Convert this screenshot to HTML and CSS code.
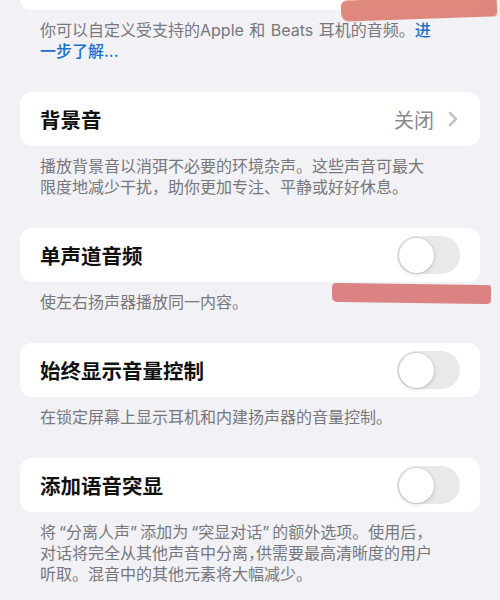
FILE: index.html
```html
<!DOCTYPE html>
<html lang="zh-CN">
  <head>
    <meta charset="UTF-8" />
    <meta name="viewport" content="width=device-width, initial-scale=1.0" />
    <title>音频辅助功能</title>
    <link rel="stylesheet" href="styles.css">
  </head>
  <body>
    <div id="settings">
      <!-- tail of the group above -->
      <div class="card card-tail"></div>
      <p class="footnote">
        你可以自定义受支持的Apple 和 Beats 耳机的音频。<a href="#">进一步了解...</a>
      </p>

      <div class="card">
        <span class="label">背景音</span>
        <span class="value">
          关闭
          <svg class="chevron" width="10" height="16" viewBox="0 0 10 16">
            <path d="M2 2l6 6-6 6" fill="none" stroke="#c4c4c8" stroke-width="2.6" stroke-linecap="round" stroke-linejoin="round" />
          </svg>
        </span>
      </div>
      <p class="footnote">
        播放背景音以消弭不必要的环境杂声。这些声音可最大限度地减少干扰，助你更加专注、平静或好好休息。
      </p>

      <div class="card">
        <span class="label">单声道音频</span>
        <span class="switch"><span class="knob"></span></span>
      </div>
      <p class="footnote">使左右扬声器播放同一内容。</p>

      <div class="card">
        <span class="label">始终显示音量控制</span>
        <span class="switch"><span class="knob"></span></span>
      </div>
      <p class="footnote">在锁定屏幕上显示耳机和内建扬声器的音量控制。</p>

      <div class="card">
        <span class="label">添加语音突显</span>
        <span class="switch"><span class="knob"></span></span>
      </div>
      <p class="footnote">
        将<q>分离人声</q>添加为<q>突显对话</q>的额外选项。使用后，对话将完全从其他声音中分离<span class="half">，</span>供需要最高清晰度的用户听取。混音中的其他元素将大幅减少。
      </p>
    </div>

    <!-- marker strokes drawn over the screen -->
    <span class="marker marker-top"></span>
    <span class="marker marker-mono"></span>
  </body>
</html>
```

FILE: styles.css
```css
body {
  margin: 0;
  background-color: #f1f1f6;
  font-family: "Noto Sans CJK SC", "Noto Sans", sans-serif;
  position: relative;
  overflow: hidden;
  height: 600px;
}
#settings {
  padding: 0 20px;
}
.card {
  background-color: #fff;
  border-radius: 12px;
  height: 54px;
  margin-top: 30px;
  padding: 0 20px;
  display: flex;
  align-items: center;
  justify-content: space-between;
}
.card-tail {
  height: 10px;
  margin-top: 0;
  border-radius: 0 0 12px 12px;
}
.label {
  font-size: 20.5px;
  font-weight: 600;
  color: #111;
}
.value {
  display: flex;
  align-items: center;
  gap: 14px;
  font-size: 20px;
  color: #8a8a8f;
  margin-right: 2px;
}
.switch {
  width: 63px;
  height: 38px;
  border-radius: 19px;
  background-color: #e9e9ec;
  display: flex;
  align-items: center;
  padding: 0 2px;
  box-sizing: border-box;
}
.knob {
  width: 35px;
  height: 35px;
  border-radius: 50%;
  background-color: #fff;
  box-shadow: 0 0 0 1px rgba(0, 0, 0, 0.08), 0 2px 4px rgba(0, 0, 0, 0.12);
}
/* latin words and quotes come from Inter, the rest from Noto CJK */
.footnote {
  margin: 0;
  padding: 10px 44px 0 20px;
  font-family: Inter, "Noto Sans CJK SC", sans-serif;
  font-size: 16px;
  line-height: 21px;
  word-spacing: 1px;
  color: #77777c;
}
.footnote a {
  color: #1a70cc;
  text-decoration: none;
  font-weight: 500;
}
.footnote q {
  quotes: "“" "”";
}
.footnote q::before {
  padding-left: 3px;
}
.footnote q::after {
  padding-right: 3px;
}
/* half-width punctuation */
.half {
  font-feature-settings: "halt";
}
.marker {
  position: absolute;
  background-color: #de7f72;
  opacity: 0.92;
  filter: blur(0.6px);
}
.marker-top {
  left: 341px;
  top: -2px;
  width: 156px;
  height: 21px;
  border-radius: 6px 2px 4px 8px;
  transform: rotate(-2deg);
}
.marker-mono {
  left: 332px;
  top: 284px;
  width: 159px;
  height: 19px;
  background-color: #d97a79;
  border-radius: 4px 3px 4px 5px;
  transform: rotate(0.8deg);
}
```
